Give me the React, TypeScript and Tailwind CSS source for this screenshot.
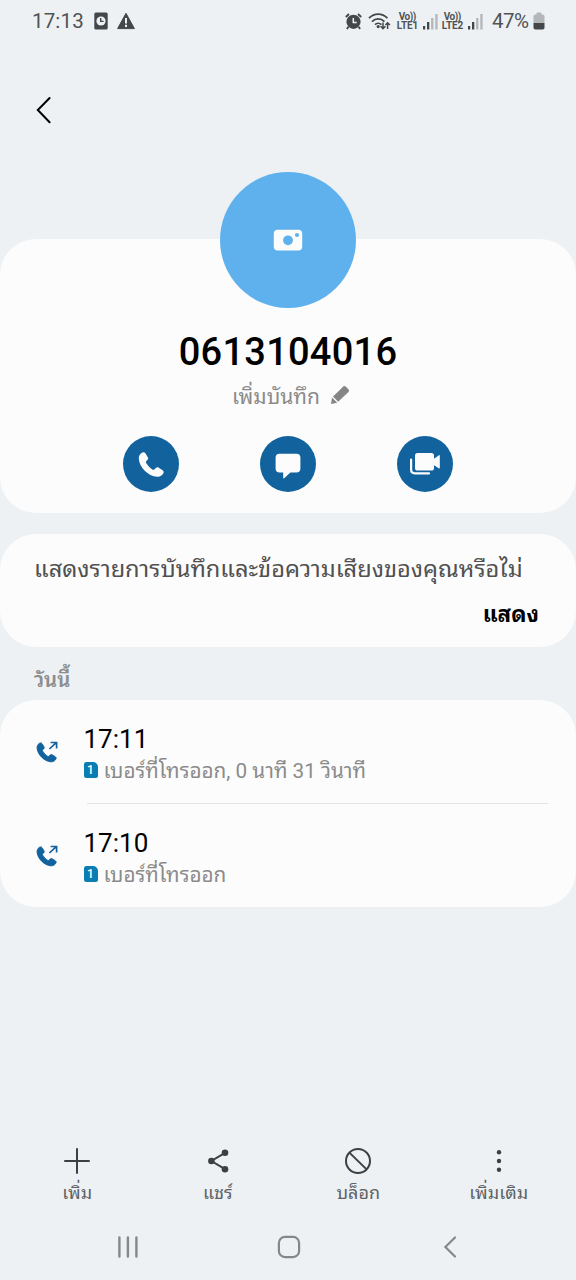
import type { ReactNode } from "react";

const handset =
  "M5.2 1.2 C3.2 1.6 .8 3.8 .8 7.4 C1.2 16 10 25.2 19.2 25.8 C22.4 25.8 25.2 23.6 25.6 21.4 C25.8 20.4 25.4 19.8 24.6 19.2 L20.4 16.6 C19.4 16 18.6 16.2 17.8 17 L16.4 18.4 C15.8 19 15 19 14.2 18.4 C11.8 16.8 9.6 14.4 8.2 12 C7.8 11.2 7.8 10.6 8.4 10 L9.6 8.8 C10.2 8 10.4 7.2 9.8 6.2 L7.4 2.2 C6.8 1.4 6.2 1 5.2 1.2Z";

function Signal() {
  return (
    <svg width="15" height="17" viewBox="0 0 15 17">
      <rect x="0" y="13" width="2.2" height="3.5" fill="#444749" />
      <rect x="4" y="9" width="2.3" height="7.5" fill="#444749" />
      <rect x="8.1" y="5" width="2.3" height="11.5" fill="#b4b7b9" />
      <rect x="12.3" y="1" width="2.3" height="15.5" fill="#b4b7b9" />
    </svg>
  );
}

function Volte({ n }: { n: number }) {
  return (
    <div className="w-[22px] text-[10px] font-bold leading-[9px] text-[#505355]">
      <div className="pl-[2px] tracking-[-0.5px]">Vo))</div>
      <div className="tracking-[-0.1px]">LTE{n}</div>
    </div>
  );
}

function StatusBar() {
  return (
    <div className="flex h-[44px] items-center pb-[2px] pl-8 pr-[31px] text-[#505355]">
      <span className="w-[52px] text-[20.5px] tracking-[0.15px]">17:13</span>
      <svg className="ml-[9.5px]" width="14" height="18" viewBox="0 0 14 18">
        <rect x=".3" y=".5" width="13.4" height="17" rx="1.6" fill="#444749" />
        <circle cx="7" cy="9" r="4.6" fill="#edf1f4" />
        <path d="M6.7 6V9.4H9.6" fill="none" stroke="#444749" strokeWidth="1.4" />
      </svg>
      <svg className="ml-[9px]" width="18" height="18" viewBox="0 0 18 18">
        <path d="M9 1.3 17.4 16.6H.6Z" fill="#444749" stroke="#444749" strokeLinejoin="round" />
        <path d="M9 6v5.4M9 12.8v2.2" stroke="#edf1f4" strokeWidth="2" />
      </svg>
      <div className="ml-auto flex items-center">
        <svg width="17" height="17" viewBox="0 0 17 17">
          <circle cx="8.5" cy="8.8" r="7.1" fill="#444749" />
          <path d="M.8 4 4 1M13 1 16.2 4M3.4 13.8 1.9 16M13.6 13.8 15.1 16" stroke="#444749" strokeWidth="1.9" />
          <path d="M8.3 5v4.4h3.4" fill="none" stroke="#edf1f4" strokeWidth="1.5" />
        </svg>
        <svg className="ml-[6px]" width="23" height="19" viewBox="0 0 23 19">
          <g fill="none" stroke="#444749" strokeWidth="1.9">
            <path d="M1 6.2C6.4.8 14 .8 19.4 6.2M4 9.6C7.6 6 12.8 6 16.4 9.6M7 12.6C8.8 10.9 11.6 10.9 13.4 12.6" />
            <path d="M15 10.5v6M12.6 14.2 15 16.6l2.4-2.4M19.6 17v-6M17.4 13l2.2-2.3L21.9 13" strokeWidth="1.5" />
          </g>
          <circle cx="10.2" cy="14.6" r="1.6" fill="#444749" />
        </svg>
        <div className="ml-[6px] flex items-center gap-[4px]">
          <Volte n={1} />
          <Signal />
        </div>
        <div className="ml-[4px] flex items-center gap-[4px]">
          <Volte n={2} />
          <Signal />
        </div>
        <span className="ml-[9.3px] w-[39px] text-[20.5px] tracking-[-0.5px]">47%</span>
        <svg className="ml-[2px]" width="12" height="18" viewBox="0 0 12 18">
          <path d="M3.5 2.5V1.3Q3.5.5 4.3.5h3.4q.8 0 .8.8v1.2h1.2q1.8 0 1.8 1.8V11H.5V4.3Q.5 2.5 2.3 2.5Z" fill="#b4b7b9" />
          <path d="M.5 11h11v4.7q0 1.8-1.8 1.8H2.3Q.5 17.5.5 15.7Z" fill="#444749" />
        </svg>
      </div>
    </div>
  );
}

function RoundButton({ children, label }: { children: ReactNode; label: string }) {
  return (
    <button aria-label={label} className="flex size-[56px] items-center justify-center rounded-full bg-[#12629d]">
      {children}
    </button>
  );
}

function CallRow({ time, detail }: { time: string; detail: string }) {
  return (
    <div className="flex h-[103px] pl-[36px] pt-[23px]">
      <svg className="mt-[18px]" width="23" height="22" viewBox="0 0 23 22">
        <path d={handset} transform="translate(.4 1) scale(.77)" fill="#12629d" stroke="#12629d" strokeWidth="1.2" />
        <path d="M13.4 8 20 1.8M14.6 1.5h6v6" fill="none" stroke="#12629d" strokeWidth="1.7" />
      </svg>
      <div className="ml-[24.5px]">
        <div className="h-[32px] text-[26px] leading-[32px] text-black">{time}</div>
        <div className="flex h-[30px] items-center">
          <span className="flex h-[16px] w-[14px] items-center justify-center rounded-[2.5px] rounded-tr-[5px] bg-[#0a7db2] text-[12px] font-medium leading-[16px] text-white">
            1
          </span>
          <span className="ml-[6px] whitespace-nowrap pt-px text-[20.7px] leading-[30px] text-[#8b8b8b]">{detail}</span>
        </div>
      </div>
    </div>
  );
}

function Action({ label, children }: { label: string; children: ReactNode }) {
  return (
    <div className="flex w-[140.5px] flex-col items-center">
      {children}
      <span className="mt-[3px] whitespace-nowrap text-[18px] leading-[30px] text-[#606365]">{label}</span>
    </div>
  );
}

export default function App() {
  return (
    <div className="flex h-[1280px] w-[576px] flex-col overflow-hidden bg-[#edf1f4] font-['Roboto','Noto_Sans_Thai_Looped','Noto_Looped_Thai','Droid_Sans_Thai','Loma','Waree','Garuda','Noto_Sans_Thai','Noto_Sans',sans-serif]">
      <StatusBar />
      <div className="h-[195px] pl-[36px] pt-[52px]">
        <svg width="16" height="28" viewBox="0 0 16 28">
          <path d="M13.6 2 1.8 14 13.6 26.2" fill="none" stroke="#000" strokeWidth="2" strokeLinecap="round" />
        </svg>
      </div>

      <section className="flex h-[274px] flex-col items-center rounded-[36px] bg-[#fcfcfc]">
        <div className="-mt-[67px] flex size-[136px] shrink-0 items-center justify-center rounded-full bg-[#5fb1ee]">
          <svg className="-mt-px" width="30" height="22" viewBox="0 0 30 22">
            <rect x=".8" y=".8" width="28.4" height="20.8" rx="4" fill="#fcfcfc" />
            <circle cx="15" cy="11.3" r="4.9" fill="#5fb1ee" />
            <circle cx="24" cy="6" r="2.1" fill="#5fb1ee" />
          </svg>
        </div>
        <h1 className="mt-[20px] h-[48px] text-[38px] font-medium leading-[48px] tracking-[0.25px] text-black">0613104016</h1>
        <div className="ml-[6px] mt-[5px] flex h-[30px] items-center gap-[10px]">
          <span className="whitespace-nowrap pt-[2px] text-[21px] leading-[30px] text-[#8b8b8b]">เพิ่มบันทึก</span>
          <svg className="-mt-[2px]" width="20" height="20" viewBox="0 0 20 20" fill="#858585">
            <path d="M1 19 2 12.6 7.2 17.8ZM3 11.6 9.8 5 15 10.2 8.2 16.8ZM9.6 5.2 13.2 1.6Q14.4.6 15.6 1.6L18.6 4.4Q19.6 5.6 18.6 6.8L15.2 10.2Z" />
          </svg>
        </div>
        <div className="mt-[25px] flex w-[330px] justify-between">
          <RoundButton label="โทร">
            <svg width="27" height="27" viewBox="0 0 27 27">
              <path d={handset} fill="#fcfcfc" />
            </svg>
          </RoundButton>
          <RoundButton label="ข้อความ">
            <svg className="mt-[4px]" width="26" height="26" viewBox="0 0 26 26">
              <path d="M4.4.8H21.6Q25.4.8 25.4 4.6V15.6Q25.4 19.6 21.4 19.6H15.4L9.2 25.2Q8.2 25.8 8.2 24.6V19.6H4.6Q.6 19.6.6 15.6V4.6Q.6.8 4.4.8Z" fill="#fcfcfc" />
            </svg>
          </RoundButton>
          <RoundButton label="วิดีโอ">
            <svg width="32" height="24" viewBox="0 0 32 24">
              <rect x="6" y="1" width="19" height="17.6" rx="2.6" fill="#fcfcfc" />
              <path d="M24 7.4 29.6 3.4Q30.8 2.6 30.8 4V15.6Q30.8 17 29.6 16.2L24 12.4Z" fill="#fcfcfc" />
              <path d="M2.1 7.6V17.6Q2.1 21.4 5.9 21.4H20" fill="none" stroke="#fcfcfc" strokeWidth="2.2" strokeLinecap="round" />
            </svg>
          </RoundButton>
        </div>
      </section>

      <section className="mt-[21px] flex h-[113px] flex-col rounded-[36px] bg-[#fcfcfc] pl-[34px] pr-[37px] pt-[19px]">
        <p className="whitespace-nowrap text-[23.6px] leading-[32px] text-[#505050]">แสดงรายการบันทึกและข้อความเสียงของคุณหรือไม่</p>
        <button className="mt-[13px] self-end text-[22.5px] font-bold leading-[32px] text-black">แสดง</button>
      </section>

      <h2 className="h-[53px] pl-[34px] pt-[18px] text-[20.5px] font-semibold leading-[30px] text-[#8b8d8f]">วันนี้</h2>

      <section className="h-[207px] rounded-[36px] bg-[#fcfcfc]">
        <CallRow time="17:11" detail="เบอร์ที่โทรออก, 0 นาที 31 วินาที" />
        <div className="ml-[87px] mr-[28px] h-px bg-[#e1e3e4]" />
        <CallRow time="17:10" detail="เบอร์ที่โทรออก" />
      </section>

      <div className="mt-[240px] flex shrink-0 pl-[7px]">
        <Action label="เพิ่ม">
          <svg width="28" height="28" viewBox="0 0 28 28">
            <path d="M14 2v24M2 14h24" stroke="#3d4042" strokeWidth="2" strokeLinecap="round" />
          </svg>
        </Action>
        <Action label="แชร์">
          <svg width="28" height="28" viewBox="0 0 28 28">
            <path d="M21 5.8 7.4 14 21 22.2" fill="none" stroke="#3d4042" strokeWidth="2" />
            <g fill="#3d4042">
              <circle cx="21" cy="5.8" r="3.3" />
              <circle cx="7.4" cy="14" r="3.3" />
              <circle cx="21" cy="22.2" r="3.3" />
            </g>
          </svg>
        </Action>
        <Action label="บล็อก">
          <svg width="28" height="28" viewBox="0 0 28 28">
            <circle cx="14" cy="14" r="12" fill="none" stroke="#3d4042" strokeWidth="2" />
            <path d="M5.4 5.6 22.6 22.4" stroke="#3d4042" strokeWidth="2" />
          </svg>
        </Action>
        <Action label="เพิ่มเติม">
          <svg width="28" height="28" viewBox="0 0 28 28" fill="#3d4042">
            <circle cx="14" cy="5.2" r="2.2" />
            <circle cx="14" cy="14" r="2.2" />
            <circle cx="14" cy="22.8" r="2.2" />
          </svg>
        </Action>
      </div>

      <nav className="mt-[26px] flex h-[26px] items-center pl-[116px]">
        <svg width="24" height="24" viewBox="0 0 24 24">
          <path d="M3.4 2.5v19M11.9 2.5v19M20.4 2.5v19" stroke="#85888b" strokeWidth="2.4" strokeLinecap="round" />
        </svg>
        <svg className="ml-[137px]" width="24" height="24" viewBox="0 0 24 24">
          <rect x="1.9" y="1.9" width="20.2" height="20.2" rx="6" fill="none" stroke="#85888b" strokeWidth="2.2" />
        </svg>
        <svg className="ml-[142px]" width="16" height="24" viewBox="0 0 16 24">
          <path d="M12 2.5 2.4 12 12 21.5" fill="none" stroke="#85888b" strokeWidth="2.2" strokeLinecap="round" />
        </svg>
      </nav>
    </div>
  );
}
